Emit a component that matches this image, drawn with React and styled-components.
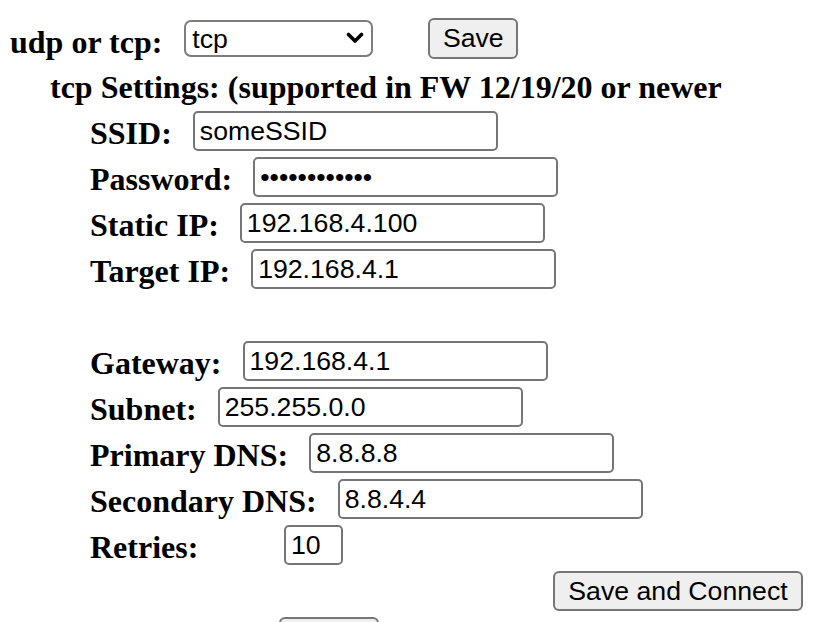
import React from "react";
import styled, { createGlobalStyle } from "styled-components";

const GlobalStyle = createGlobalStyle`
    html, body {
        margin: 0;
        padding: 0;
        background: #ffffff;
    }
`

const fields = [
    { label: "SSID:", value: "someSSID" },
    { label: "Password:", value: "somepassword", type: "password" },
    { label: "Static IP:", value: "192.168.4.100" },
    { label: "Target IP:", value: "192.168.4.1" },
    null,
    { label: "Gateway:", value: "192.168.4.1" },
    { label: "Subnet:", value: "255.255.0.0" },
    { label: "Primary DNS:", value: "8.8.8.8" },
    { label: "Secondary DNS:", value: "8.8.4.4" },
]

const Page = styled.div`
    padding: 18px 0 0 10px;
    font-family: "Liberation Serif", "Times New Roman", serif;
    color: #000;
`
const TopRow = styled.div`
    display: flex;
    align-items: center;
    height: 41px;
    gap: 22px;
`
const Label = styled.span`
    font-size: 32px;
    font-weight: bold;
    line-height: 37px;
    padding-top: ${props => props.$drop || 0}px;
    min-width: ${props => (props.$width ? props.$width + "px" : "auto")};
    white-space: nowrap;
`
const SelectWrap = styled.div`
    position: relative;
    width: 189px;
    height: 37px;
`
const Select = styled.select`
    appearance: none;
    width: 100%;
    height: 100%;
    box-sizing: border-box;
    border: 2px solid #7d7d7d;
    border-radius: 7px;
    background: #fff;
    padding: 0 0 0 6px;
    font-family: "Liberation Sans", Arial, sans-serif;
    font-size: 26.67px;
    color: #000;
    outline: none;
`
const Chevron = styled.svg`
    position: absolute;
    right: 9px;
    top: 12px;
    pointer-events: none;
`
const Button = styled.button`
    box-sizing: border-box;
    width: ${props => props.$width}px;
    height: ${props => props.$height || 40}px;
    margin-left: ${props => props.$offset || 0}px;
    border: 2px solid #767676;
    border-radius: 6px;
    background: #efefef;
    font-family: "Liberation Sans", Arial, sans-serif;
    font-size: 26.67px;
    color: #000;
    padding: 0;
    flex-shrink: 0;
`
const Heading = styled.div`
    font-size: 32px;
    font-weight: bold;
    line-height: 40px;
    padding-left: 40px;
    margin: 8px 0 1px;
    white-space: nowrap;
`
const FieldRow = styled.div`
    display: flex;
    align-items: center;
    height: 46px;
    padding-left: 80px;
    gap: 21px;
`
const ActionRow = styled.div`
    display: flex;
    align-items: center;
    height: 46px;
    padding-left: ${props => props.$indent}px;
`
const TextInput = styled.input`
    box-sizing: border-box;
    width: ${props => props.$width || 305}px;
    height: 40px;
    border: 2px solid #767676;
    border-radius: 5px;
    padding: 0 0 0 5px;
    margin: 0;
    font-family: "Liberation Sans", Arial, sans-serif;
    font-size: 26.67px;
    color: #000;
    background: #fff;
    outline: none;
    flex-shrink: 0;
`

const App = () => {
    return (
        <Page>
            <GlobalStyle />
            <TopRow>
                <Label $drop={7}>udp or tcp:</Label>
                <SelectWrap>
                    <Select value="tcp" onChange={() => {}}>
                        <option value="udp">udp</option>
                        <option value="tcp">tcp</option>
                    </Select>
                    <Chevron width="18" height="12" viewBox="0 0 18 12">
                        <path d="M2.5 2.5 L9 9 L15.5 2.5" fill="none" stroke="#000" strokeWidth="3.6" strokeLinecap="round" strokeLinejoin="round" />
                    </Chevron>
                </SelectWrap>
                <Button $width={90} $height={41} $offset={33}>Save</Button>
            </TopRow>
            <Heading>tcp Settings: (supported in FW 12/19/20 or newer</Heading>
            {fields.map((field, index) => (
                <FieldRow key={index}>
                    {field && <Label $drop={4}>{field.label}</Label>}
                    {field && <TextInput type={field.type || "text"} value={field.value} readOnly />}
                </FieldRow>
            ))}
            <FieldRow>
                <Label $drop={4} $width={173}>Retries:</Label>
                <TextInput $width={59} value="10" readOnly />
            </FieldRow>
            <ActionRow $indent={543}>
                <Button $width={250}>Save and Connect</Button>
            </ActionRow>
            <ActionRow $indent={269}>
                <Button $width={100} aria-label="Back" />
            </ActionRow>
        </Page>
    )
}

export default App
